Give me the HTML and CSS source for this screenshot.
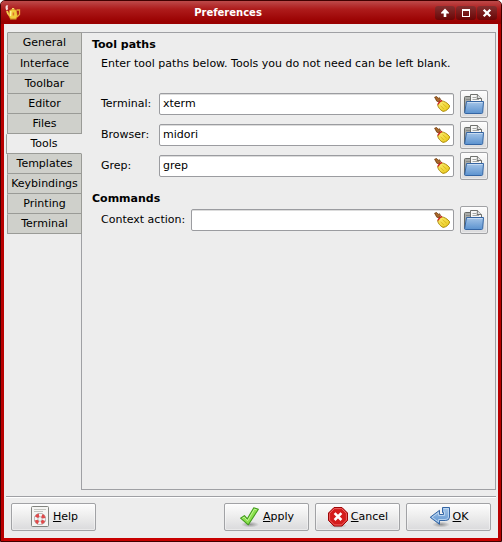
FILE: index.html
```html
<!DOCTYPE html>
<html lang="en">
<head>
<meta charset="utf-8">
<title>Preferences</title>
<link rel="stylesheet" href="styles.css">
</head>
<body>
<svg class="defs" aria-hidden="true">
  <defs>
    <linearGradient id="blue" x1="0" y1="0" x2="0" y2="1"><stop offset="0" stop-color="#a5c5e8"/><stop offset="1" stop-color="#5b92cf"/></linearGradient>
    <linearGradient id="gold" x1="0" y1="0" x2="1" y2="1"><stop offset="0" stop-color="#fff27a"/><stop offset="1" stop-color="#e6c410"/></linearGradient>
    <radialGradient id="shade"><stop offset="0" stop-color="#000" stop-opacity=".35"/><stop offset="1" stop-color="#000" stop-opacity="0"/></radialGradient>
    <symbol id="broom" viewBox="0 0 16 16">
      <path d="M.6 1.2 2.6.5 4.4 2.4 5.3 1.6 6.6 3.4 5.2 6 2.8 5.2Z" fill="#a9672a" stroke="#6f3c0c" stroke-width=".8"/>
      <path d="M7 4.8C10 4.8 13.6 7 15.7 9.8 15.2 12.6 12.4 15.2 9 15.4 6.2 14 4.2 11.6 3.6 8.8Z" fill="url(#gold)" stroke="#a68200" stroke-width=".9"/>
      <path d="M8.6 7.6 12.6 11.2M6.4 9.6 9.8 13" stroke="#d2ab10" stroke-width=".7" fill="none"/>
      <path d="M8 4.4C6.2 5 4.6 6.6 3.8 8.6" stroke="#cf2020" stroke-width="1.4" fill="none"/>
    </symbol>
    <symbol id="folder" viewBox="0 0 22 22">
      <path d="M1.5 19.5V4.5Q1.5 3.5 2.5 3.5H8.5V19.5Z" fill="#a9aba8" stroke="#686a67"/>
      <path d="M3 6.5H7" stroke="#888a87"/>
      <path d="M7.5 13V1.5H14.5L18.5 5.5V13Z" fill="#f7f7f6" stroke="#70726f"/>
      <path d="M14.5 1.5 14 5.5H18.5" fill="#ddd" stroke="#70726f"/>
      <path d="M9.5 4.5H13M9.5 6.5H16" stroke="#a5a7a4"/>
      <path d="M3.5 8.5H20.5L19.7 19.5Q19.6 20.5 18.5 20.5H2.5Q1.5 20.5 1.7 19.5Z" fill="url(#blue)" stroke="#3465a4"/>
      <path d="M4.3 9.5H19.6" stroke="#c7dbf1"/>
    </symbol>
  </defs>
</svg>
<div class="window">
  <header class="titlebar">
    <svg class="app-icon" viewBox="0 0 16 16" aria-hidden="true">
      <path d="M11.5 5H14.5V9.5L12 12" fill="none" stroke="#e8a838" stroke-width="1.3"/>
      <path d="M5 11 3 8.5 2 6" fill="none" stroke="#f3d050" stroke-width="2"/>
      <path d="M4.5 5.5Q8 3 11.5 5.5L12.3 11 11 14H5.5L4 11Z" fill="#f0cc3c" stroke="#dda52c" stroke-width=".6"/>
      <path d="M5.8 6 5.5 11" stroke="#fff29a" stroke-width="1.4"/>
      <path d="M7 4.2V3H9.2V4.2" fill="#f7d865"/>
      <path d="M8.4 7.5V10.5" stroke="#e0702c" stroke-width="1.5"/>
      <path d="M5 14.3H11.5" stroke="#b96717"/>
      <path d="M1.6 5.5Q-.2 3.5 1 .6L3.2.3Q2.2 2.5 3.2 4Z" fill="#f5dddd"/>
    </svg>
    <h1 class="title">Preferences</h1>
    <div class="window-controls">
      <button class="control" type="button" aria-label="Shade"><svg viewBox="0 0 20 14"><path d="M10 2.6 14 6.8V7.4H11.3V11H8.7V7.4H6V6.8Z" fill="#fff"/></svg></button>
      <button class="control" type="button" aria-label="Maximize"><svg viewBox="0 0 20 14"><path d="M6 3H14V11H6ZM7 5V10H13V5Z" fill="#fff" fill-rule="evenodd"/></svg></button>
      <button class="control" type="button" aria-label="Close"><svg viewBox="0 0 20 14"><path d="M6.7 3.7 13.3 10.3M13.3 3.7 6.7 10.3" stroke="#fff" stroke-width="2.3"/></svg></button>
    </div>
  </header>
  <main class="notebook">
    <nav class="tabs" role="tablist" aria-label="Sections">
      <button class="tab" type="button" role="tab">General</button>
      <button class="tab" type="button" role="tab">Interface</button>
      <button class="tab" type="button" role="tab">Toolbar</button>
      <button class="tab" type="button" role="tab">Editor</button>
      <button class="tab" type="button" role="tab">Files</button>
      <button class="tab active" type="button" role="tab" aria-selected="true">Tools</button>
      <button class="tab" type="button" role="tab">Templates</button>
      <button class="tab" type="button" role="tab">Keybindings</button>
      <button class="tab" type="button" role="tab">Printing</button>
      <button class="tab" type="button" role="tab">Terminal</button>
    </nav>
    <section class="panel" role="tabpanel">
      <h2 class="heading">Tool paths</h2>
      <p class="hint">Enter tool paths below. Tools you do not need can be left blank.</p>
      <div class="fields">
        <label for="terminal">Terminal:</label>
        <div class="entry"><input id="terminal" type="text" value="xterm"><button class="clear" type="button" aria-label="Clear"><svg><use href="#broom"/></svg></button></div>
        <button class="browse" type="button" aria-label="Browse"><svg><use href="#folder"/></svg></button>
        <label for="browser">Browser:</label>
        <div class="entry"><input id="browser" type="text" value="midori"><button class="clear" type="button" aria-label="Clear"><svg><use href="#broom"/></svg></button></div>
        <button class="browse" type="button" aria-label="Browse"><svg><use href="#folder"/></svg></button>
        <label for="grep">Grep:</label>
        <div class="entry"><input id="grep" type="text" value="grep"><button class="clear" type="button" aria-label="Clear"><svg><use href="#broom"/></svg></button></div>
        <button class="browse" type="button" aria-label="Browse"><svg><use href="#folder"/></svg></button>
      </div>
      <h2 class="heading">Commands</h2>
      <div class="fields commands">
        <label for="action">Context action:</label>
        <div class="entry"><input id="action" type="text"><button class="clear" type="button" aria-label="Clear"><svg><use href="#broom"/></svg></button></div>
        <button class="browse" type="button" aria-label="Browse"><svg><use href="#folder"/></svg></button>
      </div>
    </section>
  </main>
  <footer class="actions">
    <button class="action help" type="button">
      <svg viewBox="0 0 22 22" aria-hidden="true"><rect x="2.5" y=".5" width="17" height="20" rx="1" fill="#f5f5f3" stroke="#82847f"/><path d="M5 3.5H17M5 5.5H14" stroke="#c3c5c0"/><circle cx="11" cy="13" r="4" fill="none" stroke="#888" stroke-width="4.2"/><circle cx="11" cy="13" r="4" fill="none" stroke="#f4f4f4" stroke-width="3.2"/><circle cx="11" cy="13" r="4" fill="none" stroke="#e04a4a" stroke-width="3.2" stroke-dasharray="3.3 2.983" stroke-dashoffset="-1.5"/></svg>
      <span><u>H</u>elp</span>
    </button>
    <button class="action" type="button">
      <svg viewBox="0 0 22 22" aria-hidden="true"><ellipse cx="11" cy="18.5" rx="9" ry="3" fill="url(#shade)"/><path d="M1.6 12.2 5.4 9.6 8.3 12.8 14.8 1.8 19.4 3.2 9.3 18.8Z" fill="#8be04d" stroke="#429c1c" stroke-linejoin="round" stroke-width="1.1"/><path d="M3.4 12.3 5.2 11.1 8.5 14.8 15.4 3.2 17.7 3.9" fill="none" stroke="#c8f5a2" stroke-width=".9"/></svg>
      <span><u>A</u>pply</span>
    </button>
    <button class="action" type="button">
      <svg viewBox="0 0 22 22" aria-hidden="true"><ellipse cx="11" cy="19.5" rx="9" ry="2.5" fill="url(#shade)"/><path d="M7 1.5H15L20.5 7V14.5L15 20H7L1.5 14.5V7Z" fill="#d41c1c" stroke="#9c0707"/><path d="M7.4 2.6H14.6L19.4 7.4V14.1L14.6 18.9H7.4L2.6 14.1V7.4Z" fill="none" stroke="#ef6a6a" stroke-width=".9"/><path d="M7.6 7.2 14.4 14M14.4 7.2 7.6 14" stroke="#fff" stroke-width="2.6"/></svg>
      <span><u>C</u>ancel</span>
    </button>
    <button class="action" type="button">
      <svg viewBox="0 0 22 22" aria-hidden="true"><ellipse cx="12" cy="18.5" rx="9" ry="3" fill="url(#shade)"/><path d="M13.5 1.5H20.5V11Q20.5 14.5 16.5 14.5H10.5V18.3L1.2 11.3 10.5 4.3V8.5H14.5V6.5H13.5Z" fill="url(#blue)" stroke="#3465a4" stroke-linejoin="round"/><path d="M14.5 2.5H19.5V11Q19.5 13.5 16 13.5H9.6V16L3 11.3 9.6 6.5V9.5H15.5V5.5" fill="none" stroke="#c8ddf2" stroke-width=".8"/></svg>
      <span><u>O</u>K</span>
    </button>
  </footer>
</div>
</body>
</html>
```
FILE: styles.css
```css
* {
  box-sizing: border-box;
}

body {
  margin: 0;
  background: #fff;
  color: #000;
  font: 11px/14px "DejaVu Sans", sans-serif;
}

button,
input {
  margin: 0;
  padding: 0;
  border: 0;
  color: inherit;
  font: inherit;
}

svg {
  display: block;
  flex: none;
}

.defs {
  position: absolute;
  width: 0;
  height: 0;
}

.window {
  display: flex;
  flex-direction: column;
  min-height: 100vh;
  border: 1px solid #400000;
  border-radius: 5px 5px 0 0;
  background: #ededed;
  box-shadow: inset 3px 0 #b80000, inset -3px 0 #b80000, inset 0 -3px #c80000;
  padding: 0 3px 3px;
}

.titlebar {
  display: flex;
  align-items: center;
  height: 23px;
  margin: 0 -3px;
  padding: 0 4px;
  border-radius: 4px 4px 0 0;
  background: linear-gradient(#bd4a4a, #ae1c1c 35%, #990000 90%);
}

.app-icon {
  width: 16px;
  height: 16px;
}

.title {
  flex: 1;
  margin: 0;
  color: #fff;
  font-size: 10px;
  line-height: 14px;
  text-align: center;
}

.window-controls {
  display: flex;
  gap: 1px;
}

.control {
  width: 20px;
  height: 14px;
  border-radius: 3px;
  background: linear-gradient(#843030, #6b0505);
}

.notebook {
  display: flex;
  flex: 1;
  margin: 8px 2px 0 3px;
}

.tabs {
  position: relative;
  display: flex;
  flex-direction: column;
  width: 75px;
  margin-right: -1px;
}

.tab {
  height: 20px;
  border: 1px solid #9a9b97;
  border-top-width: 0;
  border-radius: 1px 0 0 1px;
  background: #cfd0cb;
}

.tab:first-child {
  height: 22px;
  border-top-width: 1px;
}

.tab.active {
  margin-left: -1px;
  border-right-color: #ededed;
  background: #ededed;
}

.panel {
  flex: 1;
  border: 1px solid #9fa0a4;
  padding: 5px 7px 4px 10px;
}

.heading {
  margin: 0;
  font-size: 11px;
  line-height: 14px;
}

.hint {
  margin: 5px 0 19px 9px;
}

.fields {
  display: grid;
  grid-template-columns: 52px 1fr 28px;
  align-items: center;
  gap: 3px 6px;
  margin-bottom: 12px;
  margin-left: 9px;
}

.commands {
  grid-template-columns: auto 1fr 28px;
}

.entry {
  display: flex;
  align-items: center;
  height: 22px;
  padding: 0 3px;
  border: 1px solid #9b9ca0;
  border-radius: 2px;
  background: #fff;
  box-shadow: inset 0 1px #dcdcdc;
}

.entry input {
  flex: 1;
  min-width: 0;
  background: transparent;
  outline: 0;
}

.clear {
  background: transparent;
}

.clear svg {
  width: 16px;
  height: 16px;
}

.browse,
.action {
  display: flex;
  align-items: center;
  justify-content: center;
  height: 28px;
  border: 1px solid #a1a2a5;
  border-radius: 2px;
  background: linear-gradient(#fdfdfd, #ececec 50%, #dadadc);
  box-shadow: inset 0 0 0 1px #ffffff66;
}

.browse svg,
.action svg {
  width: 22px;
  height: 22px;
}

.actions {
  display: flex;
  gap: 6px;
  margin: 6px 2px 0;
  padding: 6px 5px 7px;
  border-top: 1px solid #9fa0a4;
  box-shadow: inset 0 1px #fff;
}

.action {
  width: 85px;
  gap: 2px;
}

.help {
  margin-right: auto;
}
```
